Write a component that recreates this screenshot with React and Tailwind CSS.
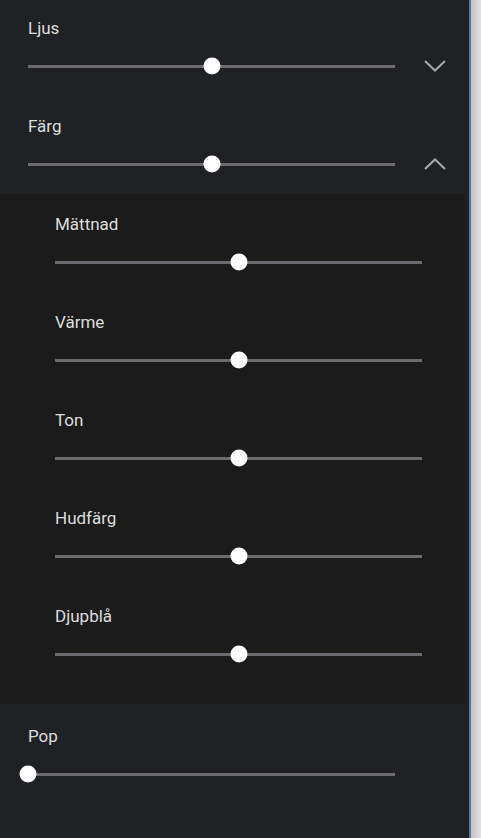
import React from 'react';

const Chevron = ({ up }) => (
    <svg width="22" height="12" viewBox="0 0 22 12" className="shrink-0">
        <polyline
            points={up ? '1,11 11,1.5 21,11' : '1,1 11,10.5 21,1'}
            fill="none"
            stroke="#a9a9ab"
            strokeWidth="2"
        />
    </svg>
);

const Slider = ({ pos }) => (
    <div className="relative h-5 w-[367px] shrink-0 flex items-center">
        <div className="h-[3px] w-full bg-[#6b6b6f]" />
        <div
            className="absolute top-1/2 h-[17px] w-[17px] -translate-x-1/2 -translate-y-1/2 rounded-full bg-white"
            style={{ left: `${pos * 100}%` }}
        />
    </div>
);

const Row = ({ label, pos = 0.5, chevron, height = 'h-[98px]' }) => (
    <div className={`${height} pt-[18px]`}>
        <div className="text-[17px] leading-5 text-[#dedede]">{label}</div>
        <div className="mt-[18px] flex items-center">
            <Slider pos={pos} />
            {chevron && (
                <div className="ml-[29px]">
                    <Chevron up={chevron === 'up'} />
                </div>
            )}
        </div>
    </div>
);

const App = () => {
    const inner = ['Mättnad', 'Värme', 'Ton', 'Hudfärg', 'Djupblå'];

    return (
        <div className="flex h-[838px] w-[481px] overflow-hidden bg-[#d6d6d8]" style={{ fontFamily: 'Roboto, "Noto Sans", sans-serif' }}>
            <div className="flex h-full w-[469px] flex-col bg-[#202125]">
                <div className="px-[28px]">
                    <Row label="Ljus" chevron="down" />
                    <Row label="Färg" chevron="up" height="h-[96px]" />
                </div>
                <div className="mr-[4px] bg-[#1b1b1b] pl-[55px] pt-[2px] pb-[18px]">
                    {inner.map((name) => (
                        <Row key={name} label={name} />
                    ))}
                </div>
                <div className="px-[28px] pt-[4px]">
                    <Row label="Pop" pos={0} />
                </div>
            </div>
            <div className="h-full w-[2px] bg-[#5a7896]" />
            <div className="h-full flex-1 bg-gradient-to-r from-[#c4c4c6] to-[#e2e2e4]" />
        </div>
    );
};

export default App;
